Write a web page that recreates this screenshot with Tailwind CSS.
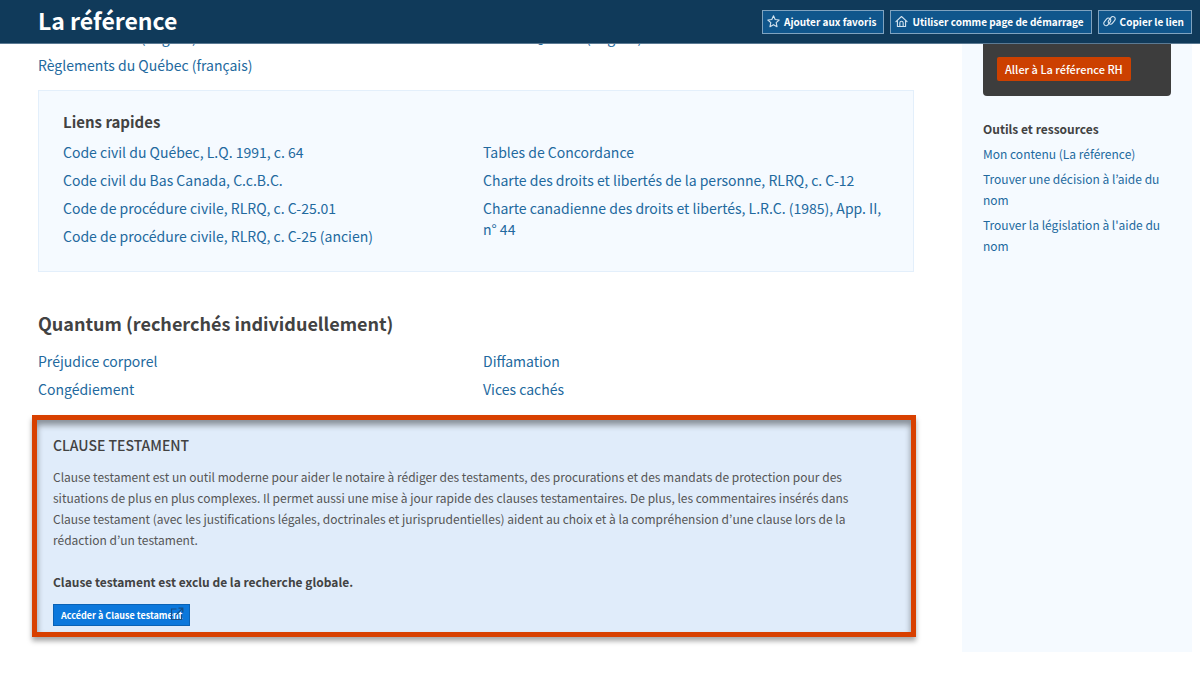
<!DOCTYPE html>
<html lang="fr">
<head>
<meta charset="utf-8">
<meta name="viewport" content="width=device-width, initial-scale=1">
<title>La référence</title>
<script src="https://cdn.jsdelivr.net/npm/@tailwindcss/browser@4"></script>
</head>
<body class="bg-white font-['Noto_Sans_CJK_KR','Noto_Sans',sans-serif] text-[14px] leading-[21px] text-[#424242]">

<header class="flex h-11 items-center justify-between border-b border-[#5b7a93] bg-[#103a5a] pr-2 pl-[38px] text-white">
  <h1 class="pb-1 text-[23px] leading-7 font-bold">La référence</h1>
  <div class="flex gap-1.5 text-[10px] leading-[22px] font-bold">
    <button type="button" class="flex h-6 items-center gap-1 border border-[#7fa3c0] bg-[#10568c] pr-[7px] pl-1">
      <svg class="size-[13px]" viewBox="0 0 14 14" fill="none" stroke="#d3e2ee" stroke-width="1.2" stroke-linejoin="round"><path d="M7 .9 8.8 4.9l4.3.5-3.2 2.9.9 4.3L7 10.400l-3.800 2.200.9-4.300L.9 5.400l4.300-.5z"/></svg>
      <span>Ajouter aux favoris</span>
    </button>
    <button type="button" class="flex h-6 items-center gap-1 border border-[#7fa3c0] bg-[#10568c] pr-[7px] pl-1">
      <svg class="size-[13px]" viewBox="0 0 14 14" fill="none" stroke="#d3e2ee" stroke-width="1.2" stroke-linejoin="round" stroke-linecap="round"><path d="M1 7.200 7 1.600l6 5.600M2.600 6v6.400h8.800V6M5.200 12.200V8.600a1.800 1.800 0 0 1 3.600 0v3.600"/></svg>
      <span>Utiliser comme page de démarrage</span>
    </button>
    <button type="button" class="flex h-6 items-center gap-1 border border-[#7fa3c0] bg-[#10568c] pr-[7px] pl-1">
      <svg class="size-[13px]" viewBox="0 0 14 14" fill="none" stroke="#d3e2ee" stroke-width="1.2"><rect x="-4.500" y="-2.500" width="9" height="5" rx="2.500" transform="translate(4.600 7.400) rotate(-50)"/><rect x="-4.500" y="-2.500" width="9" height="5" rx="2.500" transform="translate(9.400 5.800) rotate(-50)"/></svg>
      <span>Copier le lien</span>
    </button>
  </div>
</header>

<!-- Content pane, scrolled under the header -->
<div class="overflow-hidden">
<div class="-mt-11 flex gap-12 pr-2 pl-[38px]">
  <main class="min-w-0 flex-1 pt-[27px]">
    <ul class="grid grid-cols-2 gap-x-3.5 gap-y-[7px] text-[#22699e]">
      <li><a href="#">Lois du Canada (anglais)</a></li>
      <li><a href="#">Lois du Québec (anglais)</a></li>
      <li><a href="#">Règlements du Québec (français)</a></li>
    </ul>

    <section class="mt-3.5 border border-[#e3effb] bg-[#f5faff] px-6 pt-[19px] pb-6">
      <h2 class="text-[15px] leading-6 font-bold">Liens rapides</h2>
      <div class="mt-2 grid grid-cols-2 gap-x-3.5 text-[#22699e]">
        <ul class="space-y-[7px]">
          <li><a href="#">Code civil du Québec, L.Q. 1991, c. 64</a></li>
          <li><a href="#">Code civil du Bas Canada, C.c.B.C.</a></li>
          <li><a href="#">Code de procédure civile, RLRQ, c. C-25.01</a></li>
          <li><a href="#">Code de procédure civile, RLRQ, c. C-25 (ancien)</a></li>
        </ul>
        <ul class="space-y-[7px]">
          <li><a href="#">Tables de Concordance</a></li>
          <li><a href="#">Charte des droits et libertés de la personne, RLRQ, c. C-12</a></li>
          <li><a href="#">Charte canadienne des droits et libertés, L.R.C. (1985), App. II, n° 44</a></li>
        </ul>
      </div>
    </section>

    <section class="mt-[39px]">
      <h2 class="text-[18px] leading-6 font-bold">Quantum (recherchés individuellement)</h2>
      <ul class="mt-4 grid grid-cols-2 gap-x-3.5 gap-y-[7px] text-[#22699e]">
        <li><a href="#">Préjudice corporel</a></li>
        <li><a href="#">Diffamation</a></li>
        <li><a href="#">Congédiement</a></li>
        <li><a href="#">Vices cachés</a></li>
      </ul>
    </section>

    <section class="mt-[15px] -mr-0.5 -ml-1.5 border-5 border-[#d84000] bg-[#e0ecfa] px-4 pt-[15px] pb-1.5 shadow-[0_4px_5px_rgba(0,0,0,0.35),inset_0_5px_6px_rgba(0,0,0,0.4)]">
      <h2 class="font-medium">CLAUSE TESTAMENT</h2>
      <p class="mt-2.5 pr-5 text-[12px] text-[#555]">Clause testament est un outil moderne pour aider le notaire à rédiger des testaments, des procurations et des mandats de protection pour des situations de plus en plus complexes. Il permet aussi une mise à jour rapide des clauses testamentaires. De plus, les commentaires insérés dans Clause testament (avec les justifications légales, doctrinales et jurisprudentielles) aident au choix et à la compréhension d’une clause lors de la rédaction d’un testament.</p>
      <p class="mt-[21px] text-[12px] font-bold">Clause testament est exclu de la recherche globale.</p>
      <a href="#" class="relative mt-3 inline-flex h-[22px] items-center border border-[#0a62b5] bg-[#0c78dc] px-[7px] align-top text-[9px] font-bold text-white">Accéder à Clause testament
        <svg class="absolute top-0.5 right-[5px] size-3.5" viewBox="0 0 14 14" fill="none" stroke="#174f85" stroke-width="1.2"><path d="M6.500 2H1.500v10.500h10V7.500M8.500 1.200h4.300v4.300M12.600 1.400 6 8"/></svg>
      </a>
    </section>
  </main>

  <aside class="h-[652px] w-[230px] shrink-0 bg-[#f5faff] px-[21px] text-[12px]">
    <div class="rounded-b bg-[#3d3d3d] px-3.5 pt-[57px] pb-[15px]">
      <a href="#" class="inline-flex h-6 items-center rounded-xs bg-[#cc4000] px-2 align-top text-[11px] font-medium text-white">Aller à La référence RH</a>
    </div>
    <h2 class="mt-[22px] font-bold">Outils et ressources</h2>
    <ul class="mt-1 -mr-2 space-y-1 text-[#22699e]">
      <li><a href="#">Mon contenu (La référence)</a></li>
      <li><a href="#">Trouver une décision à l’aide du nom</a></li>
      <li><a href="#">Trouver la législation à l'aide du nom</a></li>
    </ul>
  </aside>
</div>
</div>
</body>
</html>
